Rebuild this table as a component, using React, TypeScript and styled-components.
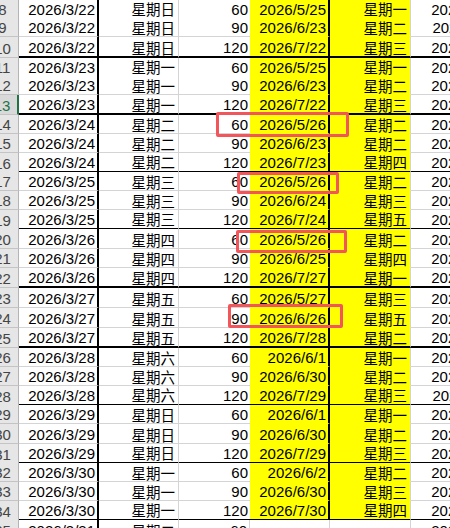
import React from 'react';
import styled, { createGlobalStyle } from 'styled-components';

const Global = createGlobalStyle`
  html, body { margin: 0; padding: 0; background: #fff; overflow: hidden; }
  #root { width: 450px; height: 528px; overflow: hidden; }
`;

const Sheet = styled.div`
  position: relative;
  width: 501px;
  font-family: "Liberation Sans", "Noto Sans CJK SC", sans-serif;
  font-size: 15px;
  color: #000;
`;

const Row = styled.div<{ $h: number }>`
  display: grid;
  grid-template-columns: 19px 80px 80px 71px 80px 81px 90px;
  height: ${(p) => p.$h}px;
`;

const Header = styled.div<{ $sel?: boolean }>`
  box-sizing: border-box;
  display: flex;
  justify-content: center;
  align-items: flex-end;
  overflow: hidden;
  white-space: nowrap;
  padding: 0 13px 0 0;
  line-height: 16px;
  background: ${(p) => (p.$sel ? '#d9d9d9' : '#e6e6e6')};
  color: ${(p) => (p.$sel ? '#217346' : '#444')};
  border-bottom: 1px solid #c4c4c4;
  border-right: ${(p) => (p.$sel ? '2px solid #217346' : '1px solid #b4b4b4')};
`;

type Edge = 'thick' | 'thin' | 'none';

const Cell = styled.div<{ $thick?: boolean; $fill?: boolean; $right: Edge; $cjk?: boolean }>`
  box-sizing: border-box;
  display: flex;
  justify-content: flex-end;
  align-items: flex-end;
  white-space: nowrap;
  padding: 0 ${(p) => (p.$cjk ? 3 : 2)}px ${(p) => (p.$cjk ? 0.5 : 0)}px 0;
  line-height: ${(p) => (p.$cjk ? 17 : 16)}px;
  font-size: ${(p) => (p.$cjk ? '14.5px' : '15px')};
  font-family: ${(p) => (p.$cjk ? '"Noto Sans CJK SC", sans-serif' : '"Liberation Sans", sans-serif')};
  background: ${(p) => (p.$fill ? '#ffff00' : '#fff')};
  border-bottom: ${(p) =>
    p.$thick ? '2px solid #000' : `1px solid ${p.$fill ? '#ffff00' : '#d4d4d4'}`};
  border-right: ${(p) =>
    p.$right === 'thick' ? '2px solid #000' : p.$right === 'thin' ? '1px solid #d4d4d4' : 'none'};
`;

const Mark = styled.div<{ $x: number; $y: number; $w: number; $h: number }>`
  position: absolute;
  box-sizing: border-box;
  left: ${(p) => p.$x}px;
  top: ${(p) => p.$y}px;
  width: ${(p) => p.$w}px;
  height: ${(p) => p.$h}px;
  border: 3px solid #f0565a;
  border-radius: 2px;
  pointer-events: none;
`;

type RowData = { n: number; a: string; b: string; c: string; d: string; e: string; f: string };

const heights = [18, 19, 21, 18, 19, 20, 19, 19, 19, 19, 19, 19, 20, 19, 20, 20, 20, 20, 19, 19, 19, 19, 20, 19, 19, 19, 19, 20];

const raw: [string, string, string, string, string][] = [
  ['2026/3/22', '星期日', '60', '2026/5/25', '星期一'],
  ['2026/3/22', '星期日', '90', '2026/6/23', '星期二'],
  ['2026/3/22', '星期日', '120', '2026/7/22', '星期三'],
  ['2026/3/23', '星期一', '60', '2026/5/25', '星期一'],
  ['2026/3/23', '星期一', '90', '2026/6/23', '星期二'],
  ['2026/3/23', '星期一', '120', '2026/7/22', '星期三'],
  ['2026/3/24', '星期二', '60', '2026/5/26', '星期二'],
  ['2026/3/24', '星期二', '90', '2026/6/23', '星期二'],
  ['2026/3/24', '星期二', '120', '2026/7/23', '星期四'],
  ['2026/3/25', '星期三', '60', '2026/5/26', '星期二'],
  ['2026/3/25', '星期三', '90', '2026/6/24', '星期三'],
  ['2026/3/25', '星期三', '120', '2026/7/24', '星期五'],
  ['2026/3/26', '星期四', '60', '2026/5/26', '星期二'],
  ['2026/3/26', '星期四', '90', '2026/6/25', '星期四'],
  ['2026/3/26', '星期四', '120', '2026/7/27', '星期一'],
  ['2026/3/27', '星期五', '60', '2026/5/27', '星期三'],
  ['2026/3/27', '星期五', '90', '2026/6/26', '星期五'],
  ['2026/3/27', '星期五', '120', '2026/7/28', '星期二'],
  ['2026/3/28', '星期六', '60', '2026/6/1', '星期一'],
  ['2026/3/28', '星期六', '90', '2026/6/30', '星期二'],
  ['2026/3/28', '星期六', '120', '2026/7/29', '星期三'],
  ['2026/3/29', '星期日', '60', '2026/6/1', '星期一'],
  ['2026/3/29', '星期日', '90', '2026/6/30', '星期二'],
  ['2026/3/29', '星期日', '120', '2026/7/29', '星期三'],
  ['2026/3/30', '星期一', '60', '2026/6/2', '星期二'],
  ['2026/3/30', '星期一', '90', '2026/6/30', '星期三'],
  ['2026/3/30', '星期一', '120', '2026/7/30', '星期四'],
  ['2026/3/31', '星期二', '60', '', ''],
];

const rows: RowData[] = raw.map((r, i) => ({
  n: i + 8,
  a: r[0],
  b: r[1],
  c: r[2],
  d: r[3],
  e: r[4],
  f: `2026/8/${10 + (i % 19)}`,
}));

const marks = [
  { x: 216, y: 112, w: 133, h: 25 },
  { x: 237, y: 172, w: 102, h: 22 },
  { x: 236, y: 230, w: 111, h: 23 },
  { x: 228, y: 304, w: 115, h: 24 },
];

export default function App() {
  return (
    <>
      <Global />
      <Sheet>
        {rows.map((r, i) => {
          const thick = (r.n - 7) % 3 === 0;
          const filled = r.d !== '';
          return (
            <Row key={r.n} $h={heights[i]}>
              <Header $sel={r.n === 13}>{r.n}</Header>
              <Cell $thick={thick} $right="thick">{r.a}</Cell>
              <Cell $thick={thick} $right="thin" $cjk>{r.b}</Cell>
              <Cell $thick={thick} $right={filled ? 'none' : 'thin'}>{r.c}</Cell>
              <Cell $thick={thick} $fill={filled} $right={filled ? 'thick' : 'thin'}>{r.d}</Cell>
              <Cell $thick={thick} $fill={filled} $right="thin" $cjk>{r.e}</Cell>
              <Cell $thick={thick} $right="thin">{r.f}</Cell>
            </Row>
          );
        })}
        {marks.map((m, i) => (
          <Mark key={i} $x={m.x} $y={m.y} $w={m.w} $h={m.h} />
        ))}
      </Sheet>
    </>
  );
}
